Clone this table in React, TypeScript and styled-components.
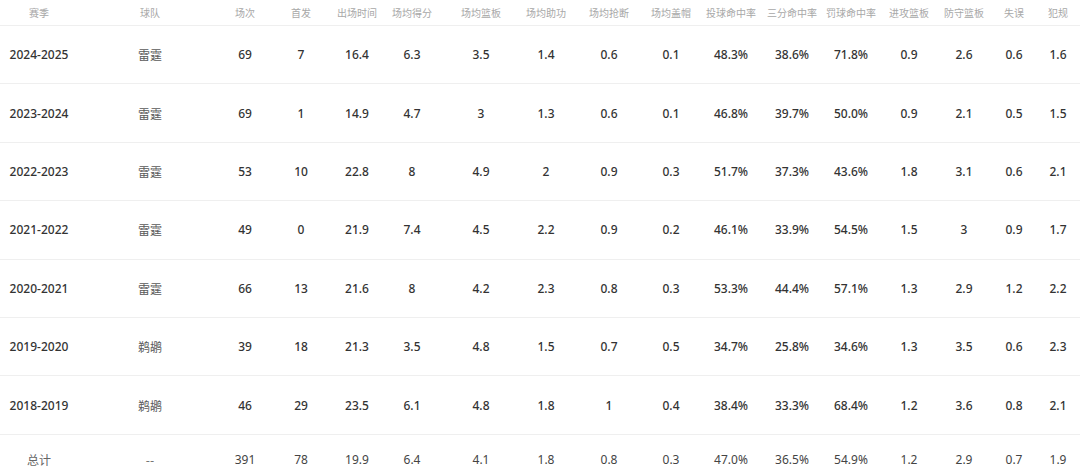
import React from "react";
import styled, { createGlobalStyle } from "styled-components";

const Global = createGlobalStyle`
  html, body { margin: 0; padding: 0; background: #fff; }
  body { font-family: "Noto Sans", "Noto Sans CJK SC", sans-serif; }
`;

const COLS = [78, 144, 46, 66, 46, 64, 74, 56, 70, 54, 66, 56, 62, 54, 56, 44, 44];

const HEAD = ["赛季", "球队", "场次", "首发", "出场时间", "场均得分", "场均篮板", "场均助功", "场均抢断", "场均盖帽", "投球命中率", "三分命中率", "罚球命中率", "进攻篮板", "防守篮板", "失误", "犯规"];

const ROWS: string[][] = [
  ["2024-2025", "雷霆", "69", "7", "16.4", "6.3", "3.5", "1.4", "0.6", "0.1", "48.3%", "38.6%", "71.8%", "0.9", "2.6", "0.6", "1.6"],
  ["2023-2024", "雷霆", "69", "1", "14.9", "4.7", "3", "1.3", "0.6", "0.1", "46.8%", "39.7%", "50.0%", "0.9", "2.1", "0.5", "1.5"],
  ["2022-2023", "雷霆", "53", "10", "22.8", "8", "4.9", "2", "0.9", "0.3", "51.7%", "37.3%", "43.6%", "1.8", "3.1", "0.6", "2.1"],
  ["2021-2022", "雷霆", "49", "0", "21.9", "7.4", "4.5", "2.2", "0.9", "0.2", "46.1%", "33.9%", "54.5%", "1.5", "3", "0.9", "1.7"],
  ["2020-2021", "雷霆", "66", "13", "21.6", "8", "4.2", "2.3", "0.8", "0.3", "53.3%", "44.4%", "57.1%", "1.3", "2.9", "1.2", "2.2"],
  ["2019-2020", "鹈鹕", "39", "18", "21.3", "3.5", "4.8", "1.5", "0.7", "0.5", "34.7%", "25.8%", "34.6%", "1.3", "3.5", "0.6", "2.3"],
  ["2018-2019", "鹈鹕", "46", "29", "23.5", "6.1", "4.8", "1.8", "1", "0.4", "38.4%", "33.3%", "68.4%", "1.2", "3.6", "0.8", "2.1"],
];

const TOTAL = ["总计", "--", "391", "78", "19.9", "6.4", "4.1", "1.8", "0.8", "0.3", "47.0%", "36.5%", "54.9%", "1.2", "2.9", "0.7", "1.9"];

const Table = styled.div`
  width: 1080px;
  display: flex;
  flex-direction: column;
`;

const Row = styled.div<{ $h: number; $line?: boolean }>`
  display: grid;
  grid-template-columns: ${COLS.map((c) => c + "px").join(" ")};
  height: ${(p) => p.$h}px;
  box-sizing: border-box;
  border-bottom: ${(p) => (p.$line ? "1px solid #efefef" : "none")};
  align-items: center;
`;

const HeadCell = styled.div`
  text-align: center;
  font-size: 10px;
  color: #a8a8a8;
  font-family: "Noto Sans CJK SC", sans-serif;
  white-space: nowrap;
`;

const Cell = styled.div<{ $kind: "num" | "cjk" | "total" | "totalcjk" }>`
  text-align: center;
  white-space: nowrap;
  font-size: 12px;
  font-family: ${(p) =>
    p.$kind === "cjk" || p.$kind === "totalcjk"
      ? '"Noto Sans CJK SC", sans-serif'
      : '"Noto Sans", "Noto Sans CJK SC", sans-serif'};
  font-weight: ${(p) => (p.$kind === "num" ? 500 : 400)};
  color: ${(p) =>
    p.$kind === "num" ? "#333" : p.$kind === "cjk" ? "#5a5a5a" : p.$kind === "total" ? "#444" : "#666"};
`;

export default function App() {
  return (
    <>
      <Global />
      <Table>
        <Row $h={26} $line>
          {HEAD.map((h) => (
            <HeadCell key={h}>{h}</HeadCell>
          ))}
        </Row>
        {ROWS.map((r, i) => (
          <Row key={i} $h={58.4} $line>
            {r.map((v, j) => (
              <Cell key={j} $kind={j === 1 ? "cjk" : "num"}>
                {v}
              </Cell>
            ))}
          </Row>
        ))}
        <Row $h={50}>
          {TOTAL.map((v, j) => (
            <Cell key={j} $kind={j === 0 || j === 1 ? "totalcjk" : "total"}>
              {v}
            </Cell>
          ))}
        </Row>
      </Table>
    </>
  );
}
